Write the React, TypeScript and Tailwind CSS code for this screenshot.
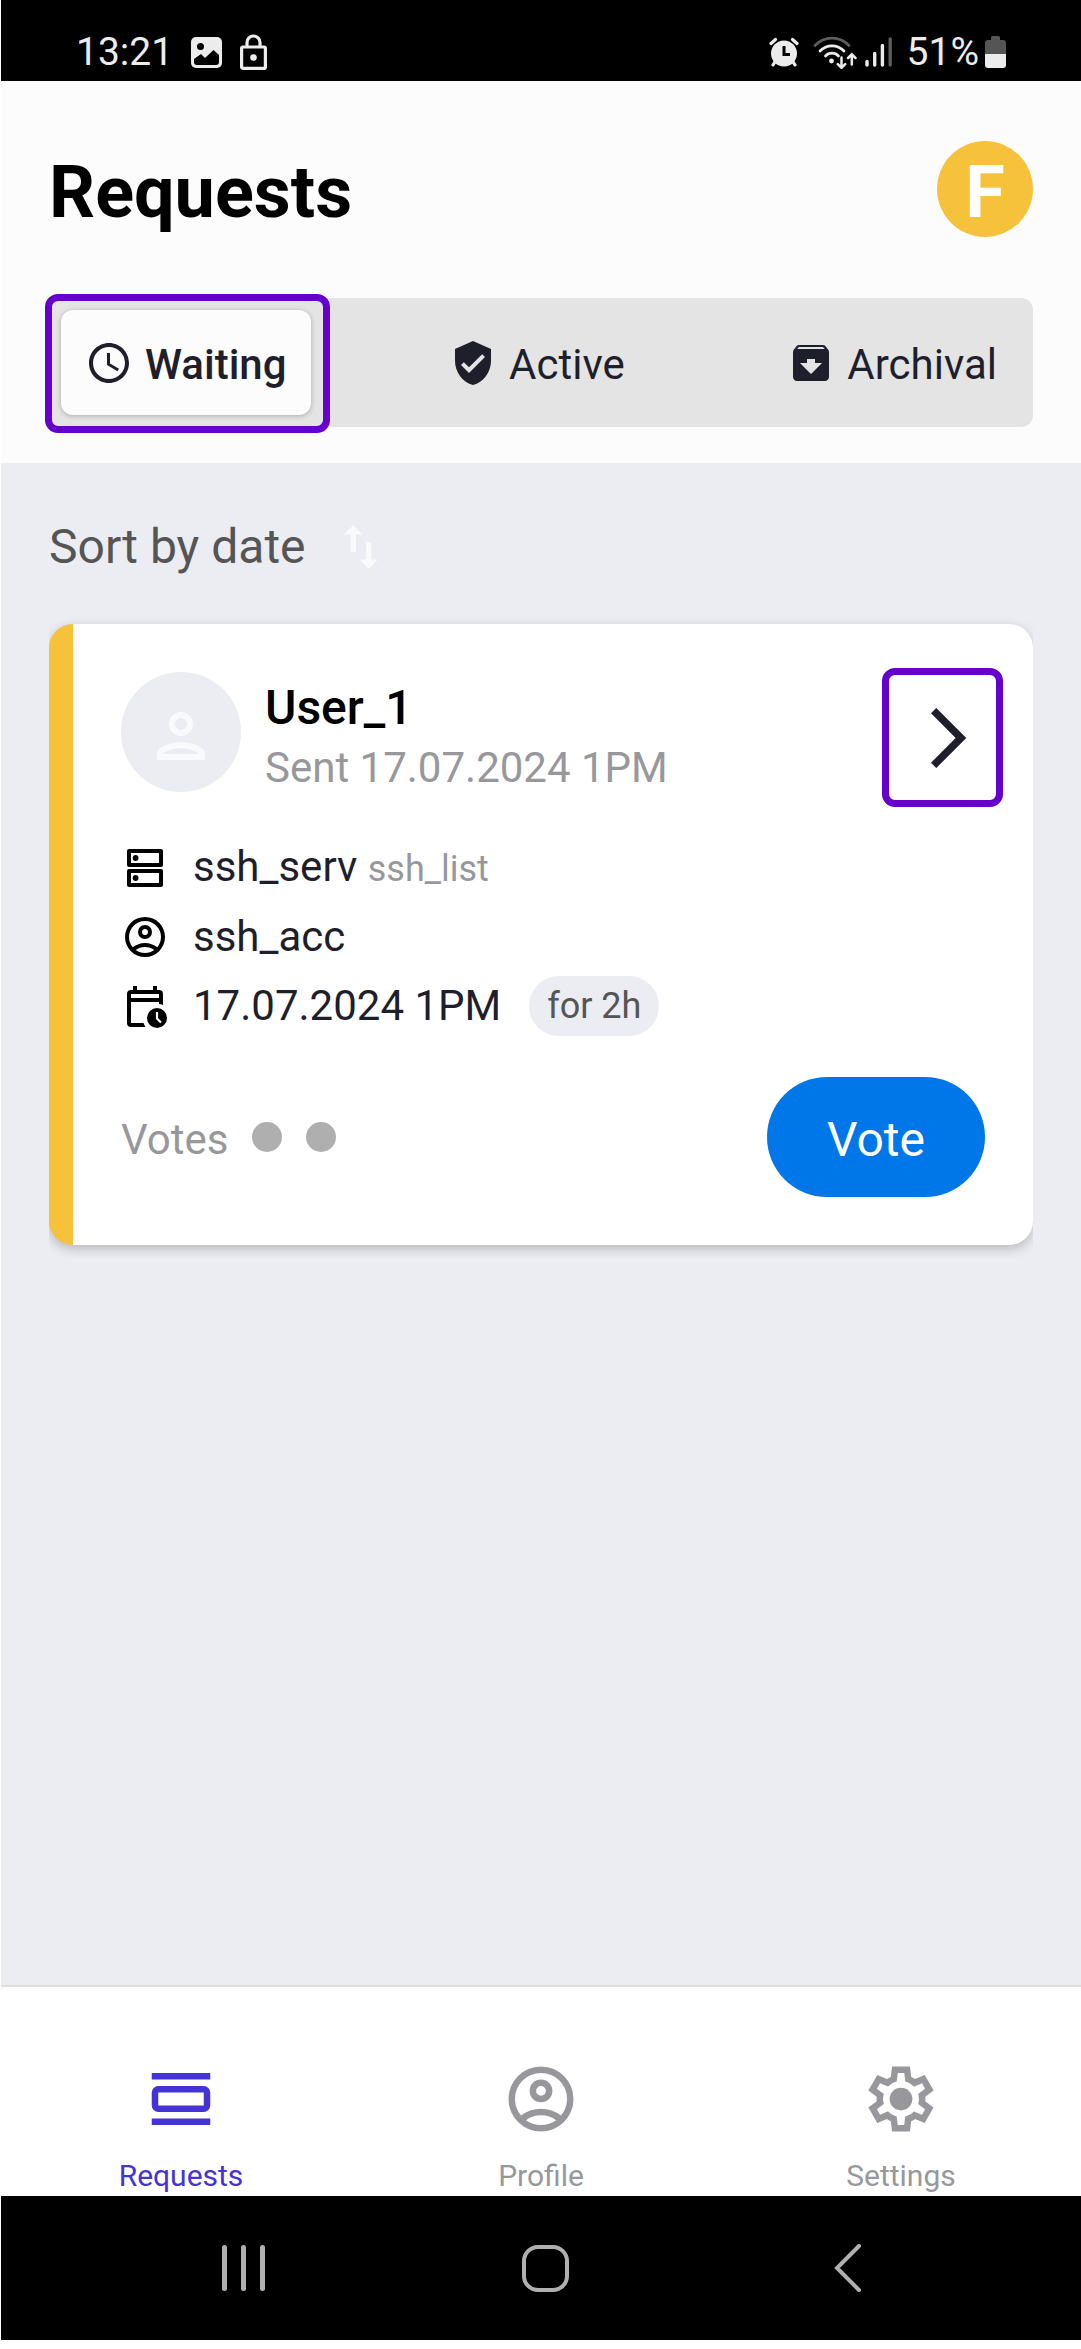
import { useState } from "react";
import clsx from "clsx";
import { MdArchive, MdOutlinePerson, MdSchedule, MdVerifiedUser } from "react-icons/md";

const tabs = [
  { label: "Waiting", icon: MdSchedule },
  { label: "Active", icon: MdVerifiedUser },
  { label: "Archival", icon: MdArchive },
];

const navItems = [
  { label: "Requests", icon: RequestsIcon },
  { label: "Profile", icon: AccountIcon },
  { label: "Settings", icon: GearIcon },
];

type IconProps = { className?: string };

function RequestsIcon({ className }: IconProps) {
  return (
    <svg viewBox="0 -960 960 960" fill="currentColor" className={className} aria-hidden="true">
      <path d="M120-800h720v80H120ZM120-240h720v80H120Z" />
      <path
        fillRule="evenodd"
        d="M200-640h560q33 0 56.5 23.5T840-560v160q0 33-23.5 56.5T760-320H200q-33 0-56.5-23.5T120-400v-160q0-33 23.5-56.5T200-640Zm0 80v160h560v-160Z"
      />
    </svg>
  );
}

function AccountIcon({ className }: IconProps) {
  return (
    <svg viewBox="0 -960 960 960" fill="currentColor" className={className} aria-hidden="true">
      <path d="M234-276q51-39 114-61.5T480-360q69 0 132 22.5T726-276q35-41 54.5-93T800-480q0-133-93.5-226.5T480-800q-133 0-226.5 93.5T160-480q0 59 19.5 111t54.5 93Zm246-164q-59 0-99.5-40.5T340-580q0-59 40.5-99.5T480-720q59 0 99.5 40.5T620-580q0 59-40.5 99.5T480-440Zm0 360q-83 0-156-31.5T197-197q-54-54-85.5-127T80-480q0-83 31.5-156T197-763q54-54 127-85.5T480-880q83 0 156 31.5T763-763q54 54 85.5 127T880-480q0 83-31.5 156T763-197q-54 54-127 85.5T480-80Zm0-80q53 0 100-15.5t86-44.5q-39-29-86-44.5T480-280q-53 0-100 15.5T294-220q39 29 86 44.5T480-160Zm0-360q26 0 43-17t17-43q0-26-17-43t-43-17q-26 0-43 17t-17 43q0 26 17 43t43 17Z" />
    </svg>
  );
}

function GearIcon({ className }: IconProps) {
  return (
    <svg viewBox="0 -960 960 960" fill="currentColor" className={className} aria-hidden="true">
      <path d="m370-80-16-128q-13-5-24.5-12T307-235l-119 50L78-375l103-78q-1-7-1-13.5v-27q0-6.5 1-13.5L78-585l110-190 119 50q11-8 23-15t24-12l16-128h220l16 128q13 5 24.5 12t22.5 15l119-50 110 190-103 78q1 7 1 13.5v27q0 6.5-2 13.5l103 78-110 190-118-50q-11 8-23 15t-24 12L590-80H370Zm70-80h79l14-106q31-8 57.5-23.5T639-327l99 41 39-68-86-65q5-14 7-29.5t2-31.5q0-16-2-31.5t-7-29.5l86-65-39-68-99 42q-22-23-48.5-38.5T533-694l-13-106h-79l-14 106q-31 8-57.5 23.5T321-633l-99-41-39 68 86 64q-5 15-7 30t-2 32q0 16 2 31t7 30l-86 65 39 68 99-42q22 23 48.5 38.5T427-266l13 106Z" />
      <circle cx="480" cy="-480" r="140" />
    </svg>
  );
}

function ServerIcon({ className }: IconProps) {
  return (
    <svg viewBox="0 0 48 48" fill="none" className={className} aria-hidden="true">
      <g stroke="currentColor" strokeWidth="4" strokeLinejoin="round">
        <rect x="8" y="7" width="32" height="14" />
        <rect x="8" y="27" width="32" height="14" />
      </g>
      <circle cx="14.6" cy="14" r="2.9" fill="currentColor" />
      <circle cx="14.6" cy="34" r="2.9" fill="currentColor" />
    </svg>
  );
}

function CalendarClockIcon({ className }: IconProps) {
  return (
    <svg viewBox="0 0 48 48" className={className} aria-hidden="true">
      <path
        fill="currentColor"
        fillRule="evenodd"
        d="M10 45a4 4 0 0 1-4-4V12a4 4 0 0 1 4-4h2V4h4v4h16V4h4v4h2a4 4 0 0 1 4 4v11a16 16 0 0 0-4-1v-2H10v21h12.500a16 16 0 0 0 2 4ZM10 12v4h28v-4Z"
      />
      <circle cx="36" cy="36" r="10" fill="currentColor" />
      <path d="M36 30v6.500l4 4" stroke="#fff" strokeWidth="2.200" fill="none" />
    </svg>
  );
}

function SortIcon({ className }: IconProps) {
  return (
    <svg viewBox="0 0 34 44" fill="currentColor" className={className} aria-hidden="true">
      <path d="M9.300 0 18.600 9.600H11.900V27H6.700V9.600H0ZM24.700 44 34 34.600H27.300V17H22.100V34.600H15.400Z" />
    </svg>
  );
}

function StatusBar() {
  return (
    <div className="flex h-[81px] items-start justify-between bg-black px-[75px] pt-8 text-[39px] leading-10 text-[#ececec]">
      <div className="flex items-center">
        <span>13:21</span>
        <svg viewBox="0 0 31 31" className="ml-[18px] h-[31px] w-[31px]" aria-hidden="true">
          <rect width="31" height="31" rx="5" fill="#ececec" />
          <circle cx="9.500" cy="9.500" r="3.500" fill="#000" />
          <path d="M3 22 10 17l4 4 8.500-8 5.500 5v7a3 3 0 0 1-3 3H6a3 3 0 0 1-3-3Z" fill="#000" />
        </svg>
        <svg viewBox="0 0 27 36" className="ml-[18px] h-9 w-[27px]" fill="none" stroke="#ececec" strokeWidth="3.200" aria-hidden="true">
          <rect x="1.600" y="13" width="23.800" height="21.400" rx="1.500" />
          <path d="M7 13V8.500a6.500 6.500 0 0 1 13 0V13" />
          <circle cx="13.500" cy="23.500" r="3.300" fill="#ececec" stroke="none" />
        </svg>
      </div>
      <div className="flex items-center">
        <svg viewBox="0 0 30 30" className="h-[30px] w-[30px]" aria-hidden="true">
          <g stroke="#ececec" strokeWidth="3.200" strokeLinecap="round">
            <path d="M2 6.500 6.500 2.500M28 6.500 23.500 2.500M6.500 24l-2.500 4M23.500 24l2.500 4" />
          </g>
          <circle cx="15" cy="16.500" r="13" fill="#ececec" />
          <path d="M15 9v8.500h6" stroke="#000" strokeWidth="3" fill="none" />
        </svg>
        <svg viewBox="0 0 44 34" className="ml-3.5 h-[34px] w-11" fill="none" strokeWidth="2.800" strokeLinecap="round" aria-hidden="true">
          <path d="M2 10.500a23.500 23.500 0 0 1 34 0" stroke="#5c5c5c" />
          <g stroke="#ececec">
            <path d="M7 16a16.500 16.500 0 0 1 24 0M12.500 21a9 9 0 0 1 13 0" />
            <path d="M28.500 22.500v10M24.800 29.200l3.700 3.600 3.700-3.600M38.800 29.500v-10M35.100 23l3.700-3.700 3.700 3.700" strokeWidth="2.500" />
          </g>
          <circle cx="18.500" cy="26" r="2.400" fill="#ececec" />
        </svg>
        <svg viewBox="0 0 28 30" className="ml-2 h-[30px] w-7" fill="none" strokeWidth="3.400" strokeLinecap="round" aria-hidden="true">
          <path d="M2 24.500v3.500M9.700 16.500V28M17.400 8.500V28" stroke="#ececec" />
          <path d="M25.200 2v26" stroke="#5c5c5c" />
        </svg>
        <span className="ml-3.5">51%</span>
        <svg viewBox="0 0 21 32" className="ml-1.5 h-8 w-[21px]" aria-hidden="true">
          <path d="M6 1.500Q6 0 7.500 0h6Q15 0 15 1.500V4h3a3 3 0 0 1 3 3v11H0V7a3 3 0 0 1 3-3h3Z" fill="#555" />
          <path d="M0 18h21v11a3 3 0 0 1-3 3H3a3 3 0 0 1-3-3Z" fill="#ececec" />
        </svg>
      </div>
    </div>
  );
}

type TabBarProps = { active: string; onChange: (label: string) => void };

function TabBar({ active, onChange }: TabBarProps) {
  return (
    <div role="tablist" className="mt-[61px] flex h-[129px] items-start justify-between rounded-xl bg-[#e4e4e4] px-3">
      {tabs.map(({ label, icon: Icon }) => {
        const selected = active === label;
        return (
          // the highlight frame reaches past the bar's edges
          <div
            key={label}
            className={clsx(
              selected
                ? "-mt-1 -mr-[19px] -ml-4 rounded-[13px] border-[7px] border-[#6600cc] bg-[#e4e4e4] pt-[9px] pr-3 pb-[11px] pl-[9px]"
                : "py-3",
            )}
          >
            <button
              type="button"
              role="tab"
              aria-selected={selected}
              onClick={() => onChange(label)}
              className={clsx(
                "flex h-[105px] items-center gap-3 rounded-xl px-6 text-[42px] text-[#1f1f2b]",
                selected && "bg-[#fcfcfc] font-medium shadow-[0_1px_5px_rgba(0,0,0,0.25)]",
              )}
            >
              <Icon className="size-12" />
              <span className="pt-1">{label}</span>
            </button>
          </div>
        );
      })}
    </div>
  );
}

function RequestCard() {
  return (
    <article className="rounded-3xl border-l-[24px] border-[#f6c13b] bg-white px-12 pt-11 pb-12 shadow-[0_4px_12px_rgba(0,0,0,0.22)]">
      <div className="flex items-start">
        <div className="mt-1 flex size-[120px] shrink-0 items-center justify-center rounded-full bg-[#ecedf3] pt-2">
          <MdOutlinePerson className="size-[72px] text-[#f9fafc]" />
        </div>
        <div className="ml-6 grow pt-2">
          <h2 className="text-[48px] leading-[64px] font-medium text-black">User_1</h2>
          <p className="text-[42px] leading-[56px] text-[#98989c]">Sent 17.07.2024 1PM</p>
        </div>
        <button
          type="button"
          aria-label="Open request"
          className="-mr-[18px] flex h-[139px] w-[121px] items-center justify-center rounded-[13px] border-[7px] border-[#6600cc] pl-3"
        >
          <svg viewBox="0 0 36 60" className="h-[60px] w-9" fill="none" aria-hidden="true">
            <path d="M2.600 2.600 30 30 2.600 57.400" stroke="#1f1f2b" strokeWidth="7.500" />
          </svg>
        </button>
      </div>

      <ul className="mt-[31px] space-y-[9px] text-[42px] leading-[60px] text-[#1f1f2b]">
        <li className="flex h-[60px] items-center">
          <ServerIcon className="mr-6 size-12 text-black" />
          <span>
            ssh_serv <span className="text-[36px] text-[#98989c]">ssh_list</span>
          </span>
        </li>
        <li className="flex h-[60px] items-center">
          <AccountIcon className="mr-6 size-12 text-black" />
          ssh_acc
        </li>
        <li className="flex h-[60px] items-center">
          <CalendarClockIcon className="mr-6 size-12 text-black" />
          17.07.2024 1PM
          <span className="ml-7 rounded-full bg-[#ecedf3] px-[18px] text-[36px] text-[#555]">for 2h</span>
        </li>
      </ul>

      <div className="mt-[41px] flex items-center justify-between">
        <div className="flex items-center gap-6 text-[42px] text-[#98989c]">
          <span className="pt-1">Votes</span>
          <span className="size-[30px] rounded-full bg-[#afafaf]" />
          <span className="size-[30px] rounded-full bg-[#afafaf]" />
        </div>
        <button type="button" className="h-[120px] rounded-full bg-[#0077e8] px-[60px] pt-1.5 text-[48px] text-white">
          Vote
        </button>
      </div>
    </article>
  );
}

function SystemNav() {
  return (
    <div className="flex h-36 items-center bg-black pr-[82px] pl-[91px] text-[#b0b0b0]">
      <button type="button" aria-label="Recent apps" className="flex flex-1 justify-center gap-3.5">
        <span className="h-[46px] w-[5px] rounded-full bg-current" />
        <span className="h-[46px] w-[5px] rounded-full bg-current" />
        <span className="h-[46px] w-[5px] rounded-full bg-current" />
      </button>
      <button type="button" aria-label="Home" className="flex flex-1 justify-center">
        <span className="size-[47px] rounded-2xl border-4 border-current" />
      </button>
      <button type="button" aria-label="Back" className="flex flex-1 justify-center">
        <svg viewBox="0 0 28 48" className="h-12 w-7" fill="none" stroke="currentColor" strokeWidth="4" strokeLinecap="round" aria-hidden="true">
          <path d="M25 2 3 24l22 22" />
        </svg>
      </button>
    </div>
  );
}

export default function App() {
  const [activeTab, setActiveTab] = useState("Waiting");
  const [page, setPage] = useState("Requests");

  return (
    <div className="flex min-h-screen flex-col bg-white pb-[9px] pl-px font-[Roboto,sans-serif]">
      <StatusBar />

      <header className="bg-[#fcfcfc] px-12 pt-[60px] pb-9">
        <div className="flex items-center justify-between">
          <h1 className="pt-2 text-[72px] leading-[88px] font-bold text-black">Requests</h1>
          <div className="flex size-24 items-center justify-center rounded-full bg-[#f6c13b] pt-2 text-[72px] leading-none font-bold text-white">
            F
          </div>
        </div>
        <TabBar active={activeTab} onChange={setActiveTab} />
      </header>

      <main className="grow bg-[#ecedf3] px-12 pt-12">
        <button type="button" className="flex h-[72px] items-center text-[48px] text-[#555]">
          Sort by date
          <SortIcon className="ml-[38px] h-11 w-[34px] text-[#f9fafc]" />
        </button>
        <div className="mt-[41px] overflow-x-clip">
          <RequestCard />
        </div>
      </main>

      <nav className="flex border-t-2 border-[#dedede] bg-white pt-[73px] pb-0.5">
        {navItems.map(({ label, icon: Icon }) => (
          <button
            key={label}
            type="button"
            onClick={() => setPage(label)}
            className={clsx(
              "flex flex-1 flex-col items-center text-[30px] leading-9",
              page === label ? "text-[#4633d6]" : "text-[#98989c]",
            )}
          >
            <Icon className="mb-5 size-[78px]" />
            {label}
          </button>
        ))}
      </nav>

      <SystemNav />
    </div>
  );
}
